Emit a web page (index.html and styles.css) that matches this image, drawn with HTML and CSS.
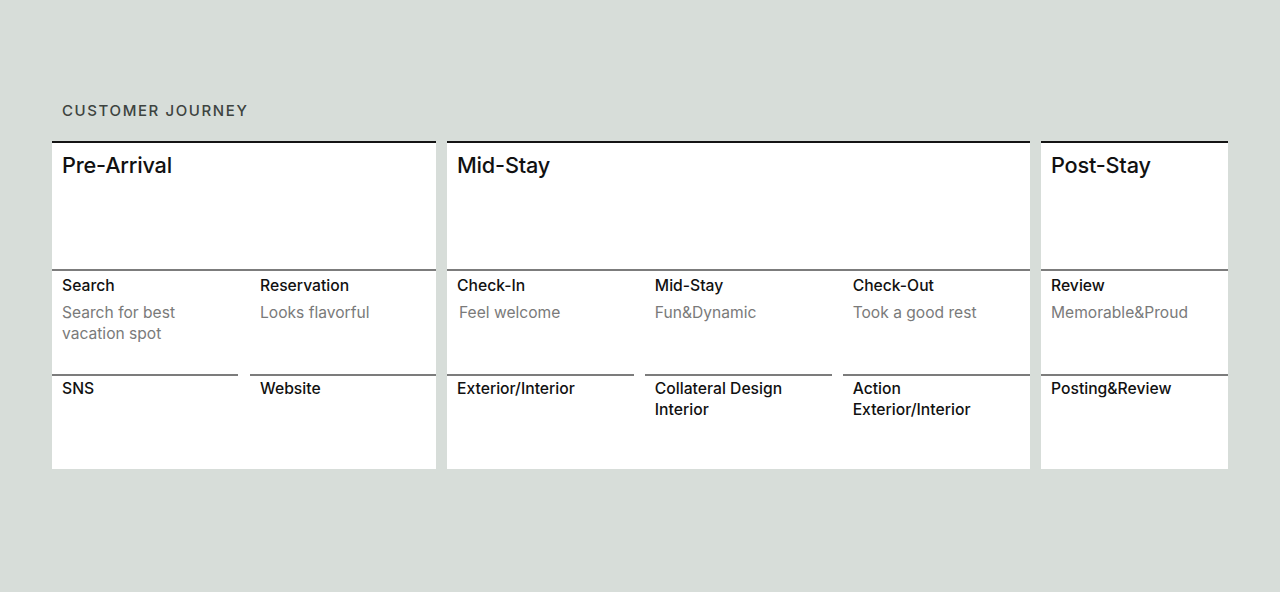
FILE: index.html
```html
<!DOCTYPE html>
<html lang="en">
<head>
<meta charset="utf-8">
<title>Customer Journey</title>
<link rel="stylesheet" href="styles.css">
</head>
<body>
<main class="page">
  <h2 class="eyebrow">CUSTOMER JOURNEY</h2>
  <div class="journey">
    <section class="stage">
      <header class="stage__head"><h3 class="stage__title">Pre-Arrival</h3></header>
      <div class="stage__cols stage__cols--wide">
        <div class="step">
          <div class="step__top">
            <h4 class="step__label">Search</h4>
            <p class="step__desc">Search for best<br>vacation spot</p>
          </div>
          <div class="step__bottom"><h4 class="step__label">SNS</h4></div>
        </div>
        <div class="step">
          <div class="step__top">
            <h4 class="step__label">Reservation</h4>
            <p class="step__desc">Looks flavorful</p>
          </div>
          <div class="step__bottom"><h4 class="step__label">Website</h4></div>
        </div>
      </div>
    </section>
    <section class="stage">
      <header class="stage__head"><h3 class="stage__title">Mid-Stay</h3></header>
      <div class="stage__cols">
        <div class="step">
          <div class="step__top">
            <h4 class="step__label">Check-In</h4>
            <p class="step__desc step__desc--nudge">Feel welcome</p>
          </div>
          <div class="step__bottom"><h4 class="step__label">Exterior/Interior</h4></div>
        </div>
        <div class="step">
          <div class="step__top">
            <h4 class="step__label">Mid-Stay</h4>
            <p class="step__desc">Fun&amp;Dynamic</p>
          </div>
          <div class="step__bottom"><h4 class="step__label">Collateral Design<br>Interior</h4></div>
        </div>
        <div class="step">
          <div class="step__top">
            <h4 class="step__label">Check-Out</h4>
            <p class="step__desc">Took a good rest</p>
          </div>
          <div class="step__bottom"><h4 class="step__label">Action<br>Exterior/Interior</h4></div>
        </div>
      </div>
    </section>
    <section class="stage">
      <header class="stage__head"><h3 class="stage__title">Post-Stay</h3></header>
      <div class="stage__cols">
        <div class="step">
          <div class="step__top">
            <h4 class="step__label">Review</h4>
            <p class="step__desc">Memorable&amp;Proud</p>
          </div>
          <div class="step__bottom"><h4 class="step__label">Posting&amp;Review</h4></div>
        </div>
      </div>
    </section>
  </div>
</main>
</body>
</html>
```

FILE: styles.css
```css
* { box-sizing: border-box; }

html, body {
  margin: 0;
  padding: 0;
}

body {
  background: #d7ddd9;
  font-family: Inter, "Liberation Sans", Arial, sans-serif;
  color: #111;
  min-height: 592px;
}

.page {
  padding: 101px 0 0 52px;
  width: 1228px;
}

.eyebrow {
  margin: 0 0 20px;
  padding-left: 10px;
  font-size: 15px;
  line-height: 20px;
  font-weight: 500;
  letter-spacing: 1.6px;
  color: #3d4340;
}

.journey {
  display: grid;
  grid-template-columns: 384px 583px 187px;
  column-gap: 11px;
  width: 1176px;
}

.stage {
  background: #fff;
  display: flex;
  flex-direction: column;
}

.stage__head {
  height: 130px;
  border-top: 2px solid #141414;
  border-bottom: 2px solid #7c7c7c;
  padding: 8px 10px 0;
}

.stage__title {
  margin: 0;
  font-size: 21.7px;
  line-height: 28px;
  font-weight: 500;
  letter-spacing: -0.2px;
}

.stage__cols {
  display: grid;
  grid-auto-flow: column;
  grid-auto-columns: 1fr;
  column-gap: 10.5px;
}

.stage__cols--wide {
  column-gap: 12px;
}

.step {
  display: flex;
  flex-direction: column;
}

.step__top {
  height: 103px;
  padding: 4px 10px 0;
}

.step__bottom {
  height: 95px;
  border-top: 2px solid #7c7c7c;
  padding: 2px 10px 0;
}

.step__label {
  margin: 0;
  font-size: 15.7px;
  line-height: 21px;
  font-weight: 500;
  color: #111;
}

.step__desc {
  margin: 7px 0 0;
  font-size: 15.6px;
  line-height: 20.5px;
  font-weight: 400;
  color: #7a7a7a;
}

.step__desc--nudge {
  padding-left: 2px;
}
```
